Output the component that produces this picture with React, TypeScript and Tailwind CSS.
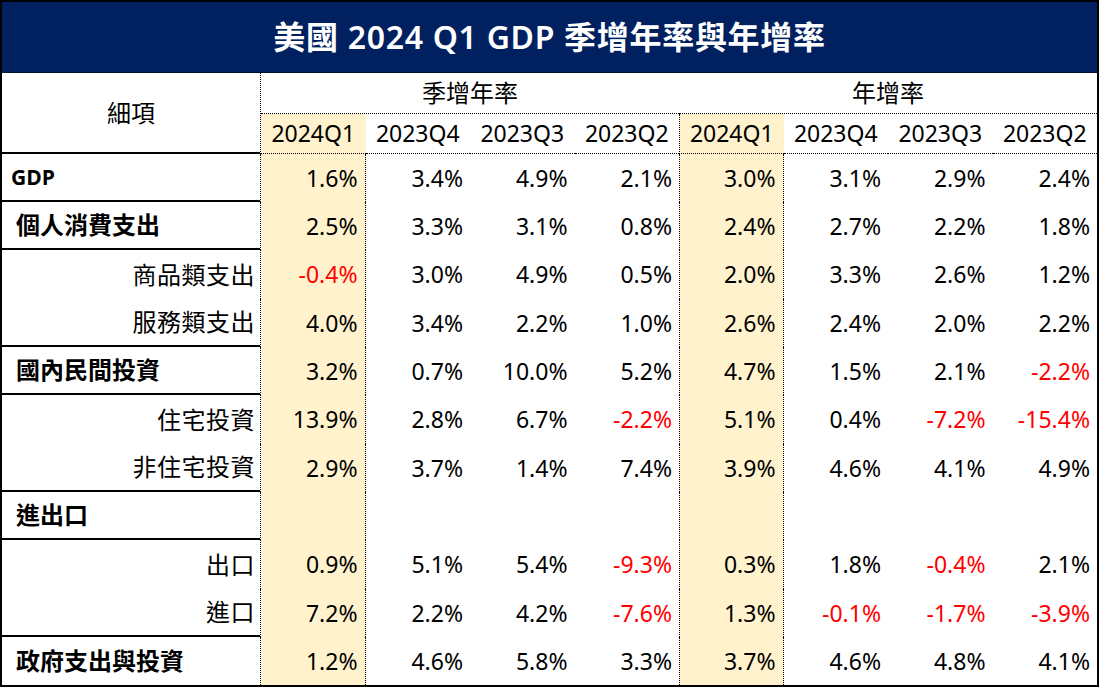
import React from "react";

type Row = {
  label: string;
  kind: "gdp" | "bold" | "sub";
  sep: boolean;
  h: string;
  q: string[];
  y: string[];
};

const rows: Row[] = [
  { label: "GDP", kind: "gdp", sep: true, h: "h-[48px]", q: ["1.6%", "3.4%", "4.9%", "2.1%"], y: ["3.0%", "3.1%", "2.9%", "2.4%"] },
  { label: "個人消費支出", kind: "bold", sep: true, h: "h-[48px]", q: ["2.5%", "3.3%", "3.1%", "0.8%"], y: ["2.4%", "2.7%", "2.2%", "1.8%"] },
  { label: "商品類支出", kind: "sub", sep: false, h: "h-[49px]", q: ["-0.4%", "3.0%", "4.9%", "0.5%"], y: ["2.0%", "3.3%", "2.6%", "1.2%"] },
  { label: "服務類支出", kind: "sub", sep: true, h: "h-[48px]", q: ["4.0%", "3.4%", "2.2%", "1.0%"], y: ["2.6%", "2.4%", "2.0%", "2.2%"] },
  { label: "國內民間投資", kind: "bold", sep: true, h: "h-[48px]", q: ["3.2%", "0.7%", "10.0%", "5.2%"], y: ["4.7%", "1.5%", "2.1%", "-2.2%"] },
  { label: "住宅投資", kind: "sub", sep: false, h: "h-[49px]", q: ["13.9%", "2.8%", "6.7%", "-2.2%"], y: ["5.1%", "0.4%", "-7.2%", "-15.4%"] },
  { label: "非住宅投資", kind: "sub", sep: true, h: "h-[48px]", q: ["2.9%", "3.7%", "1.4%", "7.4%"], y: ["3.9%", "4.6%", "4.1%", "4.9%"] },
  { label: "進出口", kind: "bold", sep: true, h: "h-[48px]", q: ["", "", "", ""], y: ["", "", "", ""] },
  { label: "出口", kind: "sub", sep: false, h: "h-[49px]", q: ["0.9%", "5.1%", "5.4%", "-9.3%"], y: ["0.3%", "1.8%", "-0.4%", "2.1%"] },
  { label: "進口", kind: "sub", sep: true, h: "h-[48px]", q: ["7.2%", "2.2%", "4.2%", "-7.6%"], y: ["1.3%", "-0.1%", "-1.7%", "-3.9%"] },
  { label: "政府支出與投資", kind: "bold", sep: false, h: "h-[48px]", q: ["1.2%", "4.6%", "5.8%", "3.3%"], y: ["3.7%", "4.6%", "4.8%", "4.1%"] },
];

const periods = ["2024Q1", "2023Q4", "2023Q3", "2023Q2"];

const cellCls = (i: number) => {
  if (i === 0) return "bg-[#FFF2CC] border-r border-dotted border-black";
  if (i === 4) return "bg-[#FFF2CC] border-l border-r border-dotted border-black";
  return "";
};

export default function App() {
  return (
    <div
      className="w-[1099px] h-[687px] border-2 border-black bg-white text-black flex flex-col overflow-hidden"
      style={{ fontFamily: '"Noto Sans", "Noto Sans CJK TC", sans-serif' }}
    >
      <div className="h-[71px] shrink-0 bg-[#002060] border-b border-dotted border-black flex items-center justify-center">
        <span className="text-white text-[32px] font-semibold leading-none tracking-[0.7px] -mt-[1px]">美國 2024 Q1 GDP 季增年率與年增率</span>
      </div>

      <div className="grid grid-cols-[259px_repeat(8,1fr)] grid-rows-[41px_40px] shrink-0">
        <div className="row-span-2 border-r border-dotted border-black relative">
          <div className="absolute inset-0 border-b-2 border-solid border-black flex items-center justify-center pt-[1px]">
            <span className="text-[24px] leading-none">細項</span>
          </div>
        </div>
        <div className="col-span-4 border-b border-dotted border-black flex items-center justify-center">
          <span className="text-[24px] leading-none">季增年率</span>
        </div>
        <div className="col-span-4 border-b border-dotted border-black flex items-center justify-center">
          <span className="text-[24px] leading-none">年增率</span>
        </div>
        {[...periods, ...periods].map((p, i) => (
          <div
            key={i}
            className={`border-b border-dotted border-black flex items-center justify-center ${
              i === 0 ? "bg-[#FFF2CC]" : i === 4 ? "bg-[#FFF2CC] border-l" : ""
            }`}
          >
            <span className="text-[23px] leading-none">{p}</span>
          </div>
        ))}
      </div>

      {rows.map((r, ri) => (
        <div key={ri} className={`grid grid-cols-[259px_repeat(8,1fr)] shrink-0 ${r.h}`}>
          <div className="border-r border-dotted border-black relative">
            <div
              className={`absolute inset-0 flex items-center ${
                r.sep ? "border-b-2 border-solid border-black" : ""
              } ${r.kind === "sub" ? "justify-end pr-[5px]" : r.kind === "gdp" ? "pl-[9px]" : "pl-[14px]"}`}
            >
              {r.kind === "gdp" ? (
                <span className="text-[21px] font-bold leading-none" style={{ fontFamily: '"Open Sans", "Noto Sans", sans-serif' }}>{r.label}</span>
              ) : r.kind === "bold" ? (
                <span className="text-[24px] font-bold leading-none">{r.label}</span>
              ) : (
                <span className="text-[24px] leading-none tracking-[0.5px]">{r.label}</span>
              )}
            </div>
          </div>
          {[...r.q, ...r.y].map((v, i) => (
            <div key={i} className={`flex items-center justify-end pr-[7px] ${cellCls(i)}`}>
              <span
                className={`text-[23px] leading-none ${v.startsWith("-") ? "text-[#FF0000]" : "text-black"}`}
              >
                {v}
              </span>
            </div>
          ))}
        </div>
      ))}
    </div>
  );
}
